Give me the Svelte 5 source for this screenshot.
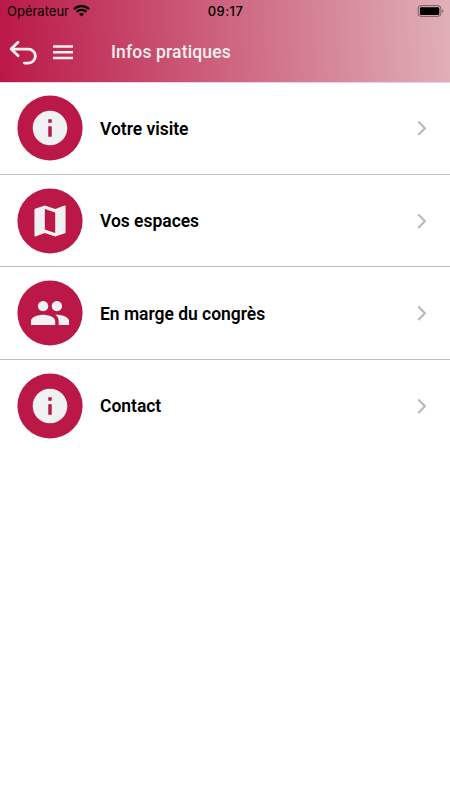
<script lang="ts">
    type Icon = 'info' | 'map' | 'people';

    type Entry = {
        label: string;
        icon: Icon;
    };

    const entries: Entry[] = [
        { label: 'Votre visite', icon: 'info' },
        { label: 'Vos espaces', icon: 'map' },
        { label: 'En marge du congrès', icon: 'people' },
        { label: 'Contact', icon: 'info' },
    ];

    const icons: Record<Icon, string> = {
        info: 'M12 2C6.48 2 2 6.48 2 12s4.48 10 10 10 10-4.48 10-10S17.52 2 12 2zm1 15h-2v-6h2v6zm0-8h-2V7h2v2z',
        map: 'M20.5 3l-.16.03L15 5.1 9 3 3.36 4.9c-.21.07-.36.25-.36.48V20.5c0 .28.22.5.5.5l.16-.03L9 18.9l6 2.1 5.64-1.9c.21-.07.36-.25.36-.48V3.5c0-.28-.22-.5-.5-.5zM15 19l-6-2.11V5l6 2.11V19z',
        people: 'M16 11c1.66 0 2.99-1.34 2.99-3S17.66 5 16 5c-1.66 0-3 1.34-3 3s1.34 3 3 3zm-8 0c1.66 0 2.99-1.34 2.99-3S9.66 5 8 5C6.34 5 5 6.34 5 8s1.34 3 3 3zm0 2c-2.33 0-7 1.17-7 3.5V19h14v-2.5c0-2.33-4.67-3.5-7-3.5zm8 0c-.29 0-.62.02-.97.05 1.16.84 1.97 1.97 1.97 3.45V19h6v-2.5c0-2.33-4.67-3.5-7-3.5z',
    };
</script>

<div class="screen">
    <header>
        <div class="status-bar">
            <div class="carrier">
                <span>Opérateur</span>
                <svg width="17" height="12" viewBox="0 0 17 12" fill="none" stroke="#000" stroke-width="2.2">
                    <path d="M1 4.1a10.7 10.7 0 0 1 15 0" />
                    <path d="M3.7 6.9a6.8 6.8 0 0 1 9.6 0" />
                    <path d="M8.5 11.6 6 9.1a3.6 3.6 0 0 1 5 0z" fill="#000" stroke="none" />
                </svg>
            </div>
            <span class="time">09:17</span>
            <div class="battery">
                <svg width="27" height="12" viewBox="0 0 27 12">
                    <rect x="1.1" y="0.6" width="22.8" height="10.8" rx="3" fill="none" stroke="#000" stroke-opacity="0.45" />
                    <rect x="2.9" y="2.2" width="19.4" height="7.8" rx="1.2" />
                    <path d="M25.4 4.2c1.2.5 1.2 3.1 0 3.6z" fill-opacity="0.6" />
                </svg>
            </div>
        </div>
        <div class="nav-bar">
            <button type="button" aria-label="Retour">
                <svg width="30" height="28" viewBox="0 0 30 28" fill="none" stroke="#f3f0f1" stroke-width="2.8">
                    <path d="M10 4.2 3.1 11.1l7 6.6M3.4 11.1h17a6.8 6.8 0 0 1 0 14H16.4" stroke-linecap="round" stroke-linejoin="round" />
                </svg>
            </button>
            <button type="button" class="menu" aria-label="Menu">
                <svg width="20" height="16" viewBox="0 0 20 16" stroke="#f3f0f1" stroke-width="2.5">
                    <path d="M0 2.5h20M0 8.3h20M0 14.1h20" />
                </svg>
            </button>
            <h1>Infos pratiques</h1>
        </div>
    </header>

    <ul>
        {#each entries as entry}
            <li>
                <svg class="badge" width="66" height="66" viewBox="0 0 66 66">
                    <circle cx="33" cy="33" r="32.6" fill="#bb1847" />
                    <path d={icons[entry.icon]} fill="#f0f1f3" transform="translate(12.25 12.25) scale(1.73)" />
                </svg>
                <span class="label">{entry.label}</span>
                <svg class="chevron" width="10" height="16" viewBox="0 0 10 16" fill="none" stroke="#b9b9b9" stroke-width="2.1">
                    <path d="M1.3 1.6 7.9 8.3l-6.6 6.7" />
                </svg>
            </li>
        {/each}
    </ul>
</div>

<style>
    :global(body) {
        background: #fff;
    }

    .screen {
        height: 800px;
        overflow: hidden;
        font-family: Roboto, sans-serif;
        color: #000;
    }

    header {
        box-sizing: border-box;
        height: 82.3px;
        background: linear-gradient(87deg, #bb1847 0%, #e0b0b8 100%);
        box-shadow: 0 1px rgba(187, 24, 71, 0.2);
    }

    .status-bar {
        display: grid;
        grid-template-columns: 1fr auto 1fr;
        align-items: center;
        height: 22px;
        padding: 0 6px 0 7px;
        font-family: Inter, sans-serif;
        font-size: 13px;
    }

    .carrier {
        display: flex;
        align-items: center;
        gap: 4.5px;
    }

    .time {
        font-weight: 500;
        letter-spacing: 0.45px;
    }

    .battery {
        display: flex;
        justify-content: flex-end;
    }

    .nav-bar {
        display: flex;
        align-items: center;
        height: 60px;
        padding-left: 8px;
    }

    button {
        display: flex;
        padding: 0;
        border: 0;
        background: none;
    }

    .menu {
        margin-left: 15px;
    }

    h1 {
        margin: 0 0 0 38px;
        color: #f3f0f1;
        font-size: 17.5px;
        font-weight: 500;
        letter-spacing: 0.15px;
    }

    ul {
        margin: 0;
        padding: 0;
        list-style: none;
    }

    li {
        display: flex;
        align-items: center;
        box-sizing: border-box;
        height: 92.5px;
        padding: 0 23.5px 0 17px;
        border-bottom: 1px solid #c0c0c0;
    }

    li:last-child {
        border-bottom-color: transparent;
    }

    .label {
        flex: 1;
        margin-left: 17px;
        padding-top: 1px;
        font-size: 17.5px;
        font-weight: 600;
        letter-spacing: -0.03px;
    }
</style>
